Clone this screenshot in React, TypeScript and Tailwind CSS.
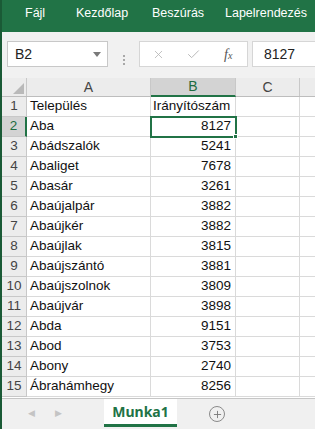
import { X, Check, Plus } from 'lucide-react';

const rows: [string, string][] = [
  ['Település', 'Irányítószám'],
  ['Aba', '8127'],
  ['Abádszalók', '5241'],
  ['Abaliget', '7678'],
  ['Abasár', '3261'],
  ['Abaújalpár', '3882'],
  ['Abaújkér', '3882'],
  ['Abaújlak', '3815'],
  ['Abaújszántó', '3881'],
  ['Abaújszolnok', '3809'],
  ['Abaújvár', '3898'],
  ['Abda', '9151'],
  ['Abod', '3753'],
  ['Abony', '2740'],
  ['Ábrahámhegy', '8256'],
];

const tabs = [
  { label: 'Fájl', w: 'w-[51px]' },
  { label: 'Kezdőlap', w: 'w-[76px]' },
  { label: 'Beszúrás', w: 'w-[73px]' },
  { label: 'Lapelrendezés', w: 'w-auto' },
];

export default function App() {
  return (
    <div className="w-[315px] h-[429px] overflow-hidden flex flex-col bg-white border-l-2 border-[#1a5a36] font-['Liberation_Sans',sans-serif]">
      {/* Ribbon tabs */}
      <div className="h-[32px] shrink-0 bg-[#217346] flex items-center pl-[23px] pb-[6px] text-white text-[12.5px]">
        {tabs.map((t) => (
          <span key={t.label} className={`${t.w} shrink-0 whitespace-nowrap`}>
            {t.label}
          </span>
        ))}
      </div>

      {/* Formula bar */}
      <div className="h-[46px] shrink-0 bg-[#f1f1f1] flex pt-[9px] pl-[5px]">
        <div className="w-[101px] h-[26px] bg-white border border-[#c8c8c8] flex items-center justify-between pl-[7px] pr-[6px]">
          <span className="text-[14px] text-[#222]">B2</span>
          <svg width="8" height="5" viewBox="0 0 8 5">
            <path d="M0 0h8L4 5z" fill="#7a7a7a" />
          </svg>
        </div>
        <div className="w-[31px] flex flex-col items-center justify-center gap-[2px]">
          <span className="w-[2px] h-[2px] bg-[#a8a8a8]" />
          <span className="w-[2px] h-[2px] bg-[#a8a8a8]" />
          <span className="w-[2px] h-[2px] bg-[#a8a8a8]" />
        </div>
        <div className="w-[109px] h-[26px] bg-white border border-[#d6d6d6] flex items-center pl-[12px]">
          <X className="w-[13px] h-[13px] text-[#b4b4b4]" strokeWidth={1.5} />
          <Check className="w-[15px] h-[15px] ml-[21px] text-[#b4b4b4]" strokeWidth={1.5} />
          <span className="ml-[23px] italic font-['Liberation_Serif',serif] text-[14px] text-[#555]">
            f<span className="text-[10px]">x</span>
          </span>
        </div>
        <div className="flex-1 ml-[4px] h-[26px] bg-white border border-[#d6d6d6] border-r-0 flex items-center pl-[11px] text-[14px] text-[#222]">
          8127
        </div>
      </div>

      {/* Column headers */}
      <div className="h-[19px] shrink-0 flex bg-[#ececec] text-[14px] text-[#444] border-b border-[#bdbdbd]">
        <div className="w-[25px] border-r border-[#c8c8c8] flex items-end justify-end pr-[2px] pb-[2px]">
          <svg width="11" height="11" viewBox="0 0 11 11">
            <path d="M11 0v11H0z" fill="#b9b9b9" />
          </svg>
        </div>
        <div className="w-[124px] border-r border-[#c8c8c8] flex items-center justify-center">A</div>
        <div className="w-[85px] bg-[#d3d3d3] border-r border-[#c8c8c8] border-b-2 border-b-[#217346] flex items-center justify-center text-[#1e6b40] -mb-px">
          B
        </div>
        <div className="w-[64px] border-r border-[#c8c8c8] flex items-center justify-center">C</div>
        <div className="flex-1" />
      </div>

      {/* Rows */}
      <div className="flex-1 flex flex-col text-[13.5px] text-[#111]">
        {rows.map(([a, b], i) => {
          const n = i + 1;
          const sel = n === 2;
          return (
            <div key={n} className="h-[20px] shrink-0 flex">
              <div
                className={
                  sel
                    ? 'w-[25px] bg-[#d3d3d3] border-r-2 border-[#217346] border-b border-b-[#c8c8c8] flex items-center justify-center text-[#1e6b40]'
                    : 'w-[25px] bg-[#ececec] border-r border-b border-[#c8c8c8] flex items-center justify-center text-[#444]'
                }
              >
                {n}
              </div>
              <div className="w-[124px] border-r border-b border-[#dadada] flex items-center pl-[3px] whitespace-nowrap">
                {a}
              </div>
              <div
                className={
                  sel
                    ? 'w-[85px] relative z-10 border-r border-b border-[#dadada] outline-2 -outline-offset-1 outline-[#217346] flex items-center justify-end pr-[4px]'
                    : `w-[85px] border-r border-b border-[#dadada] flex items-center pr-[4px] whitespace-nowrap ${n === 1 ? 'justify-start pl-[2px]' : 'justify-end'}`
                }
              >
                {b}
                {sel && <span className="absolute -right-[3px] -bottom-[3px] w-[5px] h-[5px] bg-[#217346] border border-white" />}
              </div>
              <div className="w-[64px] border-r border-b border-[#dadada]" />
              <div className="flex-1 border-b border-[#dadada]" />
            </div>
          );
        })}
      </div>

      {/* Sheet tabs */}
      <div className="h-[31px] shrink-0 bg-[#f0f0f0] border-t border-[#c6c6c6] flex items-stretch">
        <div className="w-[102px] flex items-center pl-[26px] gap-[20px] text-[#c4c4c4] text-[9px]">
          <span>◀</span>
          <span>▶</span>
        </div>
        <div className="w-[73px] bg-white border-b-[3px] border-[#217346] flex items-center justify-center font-['Noto_Sans',sans-serif] font-bold text-[14px] text-[#217346] mb-[2px]">
          Munka1
        </div>
        <div className="flex items-center pl-[32px]">
          <div className="w-[16px] h-[16px] rounded-full border border-[#8a8a8a] flex items-center justify-center">
            <Plus className="w-[11px] h-[11px] text-[#7a7a7a]" strokeWidth={2} />
          </div>
        </div>
      </div>
    </div>
  );
}
